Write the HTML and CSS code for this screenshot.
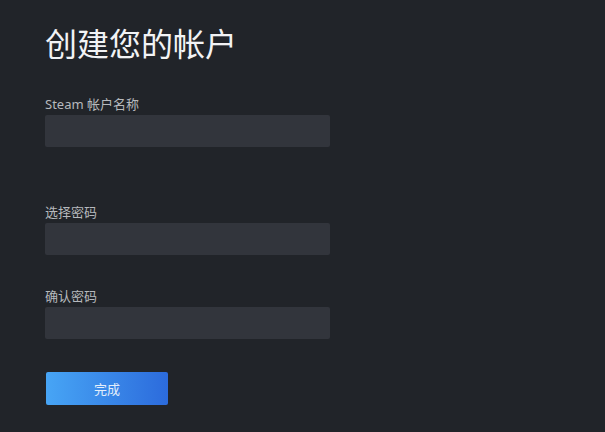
FILE: index.html
```html
<!DOCTYPE html>
<html lang="zh-CN">

<head>
    <meta charset="UTF-8">
    <meta name="viewport" content="width=device-width, initial-scale=1.0">
    <title>创建您的帐户</title>
    <link rel="stylesheet" href="styles.css">
</head>

<body>
    <div class="create-account">
        <h1>创建您的帐户</h1>
        <form class="account-form" onsubmit="return false">
            <div class="field field-name">
                <label for="accountName">Steam 帐户名称</label>
                <input type="text" id="accountName" />
            </div>
            <div class="field">
                <label for="password">选择密码</label>
                <input type="password" id="password" />
            </div>
            <div class="field">
                <label for="passwordConfirm">确认密码</label>
                <input type="password" id="passwordConfirm" />
            </div>
            <button type="submit">完成</button>
        </form>
    </div>
</body>

</html>
```

FILE: styles.css
```css
/* General Styling */
body {
    font-family: "Noto Sans", "Noto Sans CJK SC", sans-serif;
    margin: 0;
    padding: 0;
    background: #212429;
    min-height: 100vh;
}

.create-account {
    padding: 24px 0 0 45px;
}

h1 {
    margin: 0;
    font-size: 32px;
    line-height: 40px;
    font-weight: 400;
    color: #f2f3f5;
}

.account-form {
    display: flex;
    flex-direction: column;
    align-items: flex-start;
    margin-top: 32px;
}

.field {
    display: flex;
    flex-direction: column;
    gap: 3px;
    margin-bottom: 33px;
}

.field-name {
    margin-bottom: 57px;
}

label {
    font-size: 13px;
    line-height: 16px;
    color: #b6b9bd;
}

input[type="text"],
input[type="password"] {
    width: 285px;
    height: 32px;
    box-sizing: border-box;
    padding: 0 10px;
    border: none;
    border-radius: 2px;
    background: #32353c;
    color: #fff;
    font-size: 14px;
    outline: none;
}

button {
    width: 122px;
    height: 33px;
    margin-left: 1px;
    border: none;
    border-radius: 2px;
    background: linear-gradient(to right, #47a5f5, #2c6bdc);
    color: #e3eefb;
    font-family: inherit;
    font-size: 13px;
    cursor: pointer;
}

button:hover {
    background: linear-gradient(to right, #5ab0f7, #3a78e2);
}
```
